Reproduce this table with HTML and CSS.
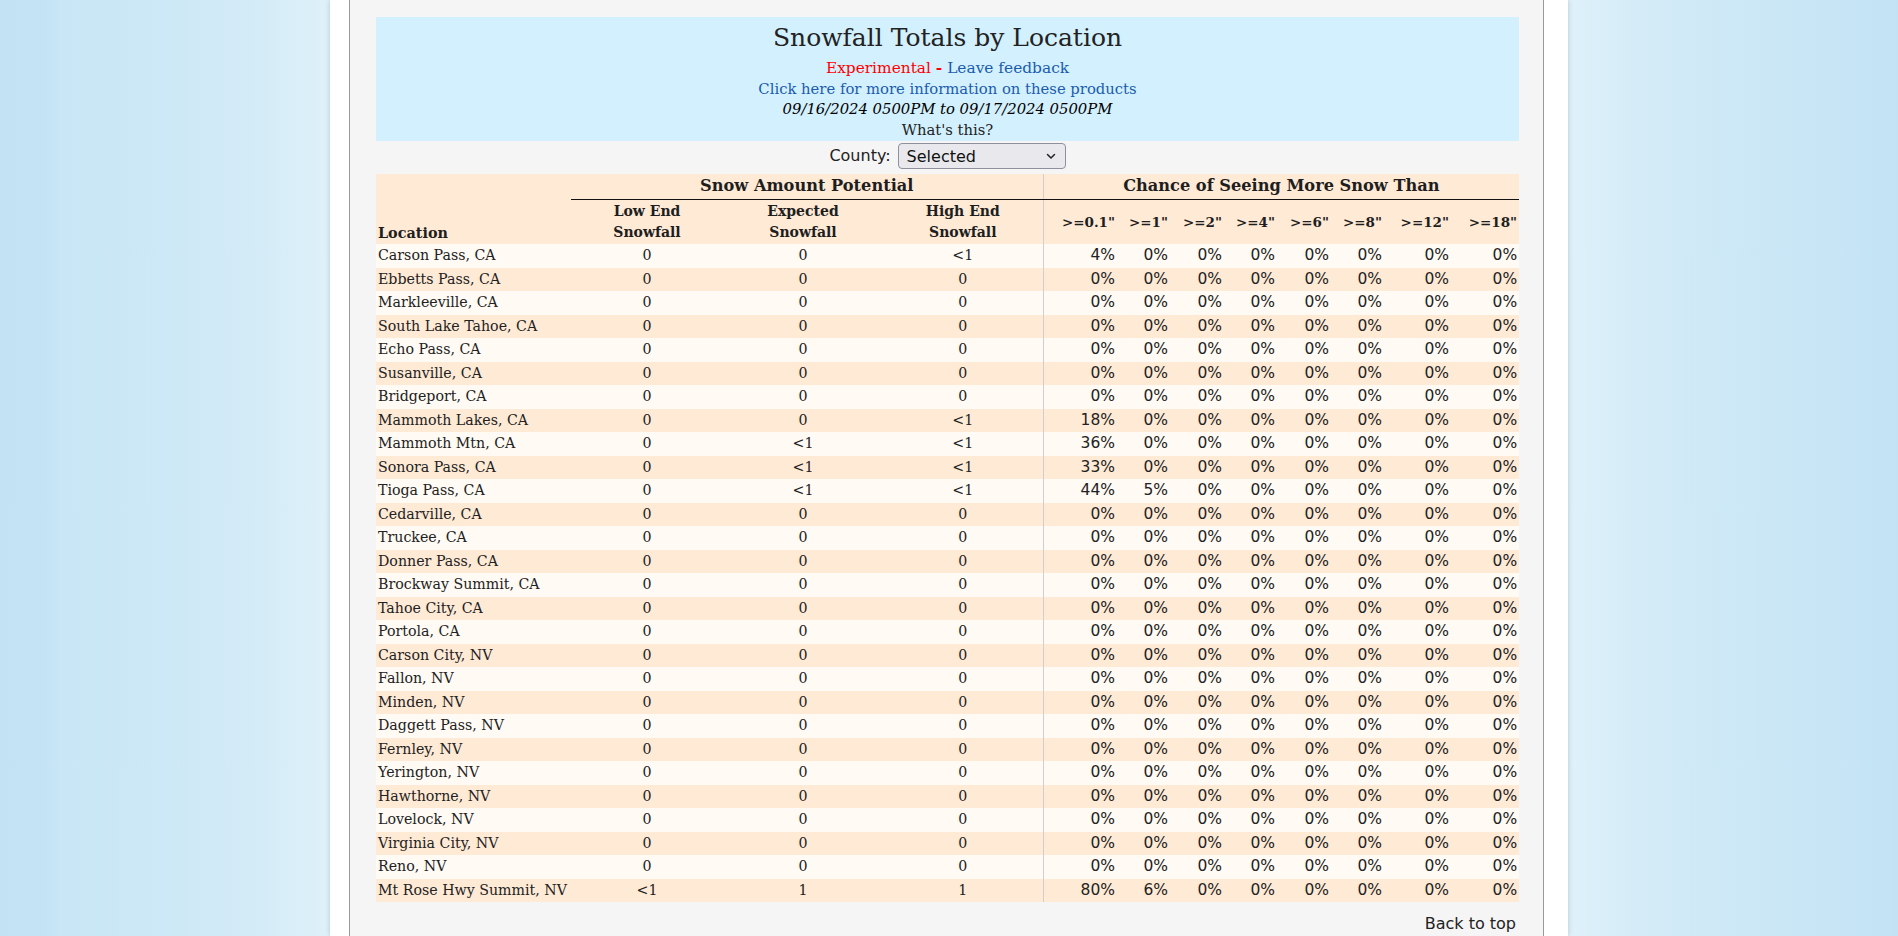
FILE: index.html
```html
<!DOCTYPE html>
<html lang="en">
<head>
<meta charset="utf-8">
<title>Snowfall Totals by Location</title>
<link rel="stylesheet" href="styles.css">
</head>
<body>
<div class="page">
  <div class="panel">
    <div class="banner">
      <h1 class="title">Snowfall Totals by Location</h1>
      <div class="line line-exp"><span class="exp">Experimental <b>-</b> </span><a class="link" href="#">Leave feedback</a></div>
      <div class="line"><a class="link" href="#">Click here for more information on these products</a></div>
      <div class="line date">09/16/2024 0500PM to 09/17/2024 0500PM</div>
      <div class="line">What's this?</div>
    </div>
    <div class="county">
      <span class="county-label">County:</span>
      <div class="select">
        <span>Selected</span>
        <svg class="chev" width="10" height="7" viewBox="0 0 10 7"><path d="M1.5 1.5 L5 5 L8.5 1.5" fill="none" stroke="#222" stroke-width="1.5" stroke-linecap="round" stroke-linejoin="round"/></svg>
      </div>
    </div>
    <table class="snow">
      <colgroup>
        <col class="c-loc"><col class="c-amt1"><col class="c-amt"><col class="c-amt">
        <col class="c-p1"><col class="c-p53"><col class="c-p54"><col class="c-p53"><col class="c-p54"><col class="c-p53"><col class="c-p67"><col class="c-p68">
      </colgroup>
      <thead>
        <tr class="h1row">
          <th class="th-loc" rowspan="2">Location</th>
          <th class="th-group" colspan="3">Snow Amount Potential</th>
          <th class="th-group sep" colspan="8">Chance of Seeing More Snow Than</th>
        </tr>
        <tr class="h2row">
          <th class="th-amt">Low End<br>Snowfall</th>
          <th class="th-amt">Expected<br>Snowfall</th>
          <th class="th-amt">High End<br>Snowfall</th>
          <th class="th-p sep">&gt;=0.1"</th>
          <th class="th-p">&gt;=1"</th>
          <th class="th-p">&gt;=2"</th>
          <th class="th-p">&gt;=4"</th>
          <th class="th-p">&gt;=6"</th>
          <th class="th-p">&gt;=8"</th>
          <th class="th-p">&gt;=12"</th>
          <th class="th-p">&gt;=18"</th>
        </tr>
      </thead>
      <tbody class="rows">
        <tr><td class="loc">Carson Pass, CA</td><td class="amt">0</td><td class="amt">0</td><td class="amt">&lt;1</td><td class="pct sep">4%</td><td class="pct">0%</td><td class="pct">0%</td><td class="pct">0%</td><td class="pct">0%</td><td class="pct">0%</td><td class="pct">0%</td><td class="pct">0%</td></tr>
        <tr><td class="loc">Ebbetts Pass, CA</td><td class="amt">0</td><td class="amt">0</td><td class="amt">0</td><td class="pct sep">0%</td><td class="pct">0%</td><td class="pct">0%</td><td class="pct">0%</td><td class="pct">0%</td><td class="pct">0%</td><td class="pct">0%</td><td class="pct">0%</td></tr>
        <tr><td class="loc">Markleeville, CA</td><td class="amt">0</td><td class="amt">0</td><td class="amt">0</td><td class="pct sep">0%</td><td class="pct">0%</td><td class="pct">0%</td><td class="pct">0%</td><td class="pct">0%</td><td class="pct">0%</td><td class="pct">0%</td><td class="pct">0%</td></tr>
        <tr><td class="loc">South Lake Tahoe, CA</td><td class="amt">0</td><td class="amt">0</td><td class="amt">0</td><td class="pct sep">0%</td><td class="pct">0%</td><td class="pct">0%</td><td class="pct">0%</td><td class="pct">0%</td><td class="pct">0%</td><td class="pct">0%</td><td class="pct">0%</td></tr>
        <tr><td class="loc">Echo Pass, CA</td><td class="amt">0</td><td class="amt">0</td><td class="amt">0</td><td class="pct sep">0%</td><td class="pct">0%</td><td class="pct">0%</td><td class="pct">0%</td><td class="pct">0%</td><td class="pct">0%</td><td class="pct">0%</td><td class="pct">0%</td></tr>
        <tr><td class="loc">Susanville, CA</td><td class="amt">0</td><td class="amt">0</td><td class="amt">0</td><td class="pct sep">0%</td><td class="pct">0%</td><td class="pct">0%</td><td class="pct">0%</td><td class="pct">0%</td><td class="pct">0%</td><td class="pct">0%</td><td class="pct">0%</td></tr>
        <tr><td class="loc">Bridgeport, CA</td><td class="amt">0</td><td class="amt">0</td><td class="amt">0</td><td class="pct sep">0%</td><td class="pct">0%</td><td class="pct">0%</td><td class="pct">0%</td><td class="pct">0%</td><td class="pct">0%</td><td class="pct">0%</td><td class="pct">0%</td></tr>
        <tr><td class="loc">Mammoth Lakes, CA</td><td class="amt">0</td><td class="amt">0</td><td class="amt">&lt;1</td><td class="pct sep">18%</td><td class="pct">0%</td><td class="pct">0%</td><td class="pct">0%</td><td class="pct">0%</td><td class="pct">0%</td><td class="pct">0%</td><td class="pct">0%</td></tr>
        <tr><td class="loc">Mammoth Mtn, CA</td><td class="amt">0</td><td class="amt">&lt;1</td><td class="amt">&lt;1</td><td class="pct sep">36%</td><td class="pct">0%</td><td class="pct">0%</td><td class="pct">0%</td><td class="pct">0%</td><td class="pct">0%</td><td class="pct">0%</td><td class="pct">0%</td></tr>
        <tr><td class="loc">Sonora Pass, CA</td><td class="amt">0</td><td class="amt">&lt;1</td><td class="amt">&lt;1</td><td class="pct sep">33%</td><td class="pct">0%</td><td class="pct">0%</td><td class="pct">0%</td><td class="pct">0%</td><td class="pct">0%</td><td class="pct">0%</td><td class="pct">0%</td></tr>
        <tr><td class="loc">Tioga Pass, CA</td><td class="amt">0</td><td class="amt">&lt;1</td><td class="amt">&lt;1</td><td class="pct sep">44%</td><td class="pct">5%</td><td class="pct">0%</td><td class="pct">0%</td><td class="pct">0%</td><td class="pct">0%</td><td class="pct">0%</td><td class="pct">0%</td></tr>
        <tr><td class="loc">Cedarville, CA</td><td class="amt">0</td><td class="amt">0</td><td class="amt">0</td><td class="pct sep">0%</td><td class="pct">0%</td><td class="pct">0%</td><td class="pct">0%</td><td class="pct">0%</td><td class="pct">0%</td><td class="pct">0%</td><td class="pct">0%</td></tr>
        <tr><td class="loc">Truckee, CA</td><td class="amt">0</td><td class="amt">0</td><td class="amt">0</td><td class="pct sep">0%</td><td class="pct">0%</td><td class="pct">0%</td><td class="pct">0%</td><td class="pct">0%</td><td class="pct">0%</td><td class="pct">0%</td><td class="pct">0%</td></tr>
        <tr><td class="loc">Donner Pass, CA</td><td class="amt">0</td><td class="amt">0</td><td class="amt">0</td><td class="pct sep">0%</td><td class="pct">0%</td><td class="pct">0%</td><td class="pct">0%</td><td class="pct">0%</td><td class="pct">0%</td><td class="pct">0%</td><td class="pct">0%</td></tr>
        <tr><td class="loc">Brockway Summit, CA</td><td class="amt">0</td><td class="amt">0</td><td class="amt">0</td><td class="pct sep">0%</td><td class="pct">0%</td><td class="pct">0%</td><td class="pct">0%</td><td class="pct">0%</td><td class="pct">0%</td><td class="pct">0%</td><td class="pct">0%</td></tr>
        <tr><td class="loc">Tahoe City, CA</td><td class="amt">0</td><td class="amt">0</td><td class="amt">0</td><td class="pct sep">0%</td><td class="pct">0%</td><td class="pct">0%</td><td class="pct">0%</td><td class="pct">0%</td><td class="pct">0%</td><td class="pct">0%</td><td class="pct">0%</td></tr>
        <tr><td class="loc">Portola, CA</td><td class="amt">0</td><td class="amt">0</td><td class="amt">0</td><td class="pct sep">0%</td><td class="pct">0%</td><td class="pct">0%</td><td class="pct">0%</td><td class="pct">0%</td><td class="pct">0%</td><td class="pct">0%</td><td class="pct">0%</td></tr>
        <tr><td class="loc">Carson City, NV</td><td class="amt">0</td><td class="amt">0</td><td class="amt">0</td><td class="pct sep">0%</td><td class="pct">0%</td><td class="pct">0%</td><td class="pct">0%</td><td class="pct">0%</td><td class="pct">0%</td><td class="pct">0%</td><td class="pct">0%</td></tr>
        <tr><td class="loc">Fallon, NV</td><td class="amt">0</td><td class="amt">0</td><td class="amt">0</td><td class="pct sep">0%</td><td class="pct">0%</td><td class="pct">0%</td><td class="pct">0%</td><td class="pct">0%</td><td class="pct">0%</td><td class="pct">0%</td><td class="pct">0%</td></tr>
        <tr><td class="loc">Minden, NV</td><td class="amt">0</td><td class="amt">0</td><td class="amt">0</td><td class="pct sep">0%</td><td class="pct">0%</td><td class="pct">0%</td><td class="pct">0%</td><td class="pct">0%</td><td class="pct">0%</td><td class="pct">0%</td><td class="pct">0%</td></tr>
        <tr><td class="loc">Daggett Pass, NV</td><td class="amt">0</td><td class="amt">0</td><td class="amt">0</td><td class="pct sep">0%</td><td class="pct">0%</td><td class="pct">0%</td><td class="pct">0%</td><td class="pct">0%</td><td class="pct">0%</td><td class="pct">0%</td><td class="pct">0%</td></tr>
        <tr><td class="loc">Fernley, NV</td><td class="amt">0</td><td class="amt">0</td><td class="amt">0</td><td class="pct sep">0%</td><td class="pct">0%</td><td class="pct">0%</td><td class="pct">0%</td><td class="pct">0%</td><td class="pct">0%</td><td class="pct">0%</td><td class="pct">0%</td></tr>
        <tr><td class="loc">Yerington, NV</td><td class="amt">0</td><td class="amt">0</td><td class="amt">0</td><td class="pct sep">0%</td><td class="pct">0%</td><td class="pct">0%</td><td class="pct">0%</td><td class="pct">0%</td><td class="pct">0%</td><td class="pct">0%</td><td class="pct">0%</td></tr>
        <tr><td class="loc">Hawthorne, NV</td><td class="amt">0</td><td class="amt">0</td><td class="amt">0</td><td class="pct sep">0%</td><td class="pct">0%</td><td class="pct">0%</td><td class="pct">0%</td><td class="pct">0%</td><td class="pct">0%</td><td class="pct">0%</td><td class="pct">0%</td></tr>
        <tr><td class="loc">Lovelock, NV</td><td class="amt">0</td><td class="amt">0</td><td class="amt">0</td><td class="pct sep">0%</td><td class="pct">0%</td><td class="pct">0%</td><td class="pct">0%</td><td class="pct">0%</td><td class="pct">0%</td><td class="pct">0%</td><td class="pct">0%</td></tr>
        <tr><td class="loc">Virginia City, NV</td><td class="amt">0</td><td class="amt">0</td><td class="amt">0</td><td class="pct sep">0%</td><td class="pct">0%</td><td class="pct">0%</td><td class="pct">0%</td><td class="pct">0%</td><td class="pct">0%</td><td class="pct">0%</td><td class="pct">0%</td></tr>
        <tr><td class="loc">Reno, NV</td><td class="amt">0</td><td class="amt">0</td><td class="amt">0</td><td class="pct sep">0%</td><td class="pct">0%</td><td class="pct">0%</td><td class="pct">0%</td><td class="pct">0%</td><td class="pct">0%</td><td class="pct">0%</td><td class="pct">0%</td></tr>
        <tr><td class="loc">Mt Rose Hwy Summit, NV</td><td class="amt">&lt;1</td><td class="amt">1</td><td class="amt">1</td><td class="pct sep">80%</td><td class="pct">6%</td><td class="pct">0%</td><td class="pct">0%</td><td class="pct">0%</td><td class="pct">0%</td><td class="pct">0%</td><td class="pct">0%</td></tr>
      </tbody>
    </table>
    <div class="back"><a class="back-link" href="#">Back to top</a></div>
  </div>
</div>
</body>
</html>
```

FILE: styles.css
```css
html, body {
  margin: 0;
  padding: 0;
  height: 100%;
}

body {
  background: linear-gradient(to right,
    #c3e2f4 0px, #c4e3f5 45px, #c8e6f5 60px, #cde8f6 165px, #d3ebf7 250px, #dbeff9 310px, #e0f1fa 330px,
    #e0f1fa 1568px, #dbeff9 1590px, #d3ebf7 1650px, #cde8f6 1730px, #c8e6f5 1800px, #c3e2f4 1898px);
  font-family: "DejaVu Sans", Verdana, sans-serif;
  color: #222;
  overflow: hidden;
}

.page {
  width: 1238px;
  margin: 0 auto;
  box-sizing: border-box;
  min-height: 100%;
  background: #fff;
  padding: 0 24px 0 19px;
  box-shadow: 0 0 5px rgba(90, 120, 140, 0.35);
}

.panel {
  background: #f5f5f5;
  border-left: 1px solid #9a9a9a;
  border-right: 1px solid #9a9a9a;
  min-height: 936px;
  box-sizing: border-box;
  padding: 17px 24px 0 26px;
}

.banner {
  background: #d3f0fe;
  text-align: center;
  padding: 6px 0 1px;
  font-family: "DejaVu Serif", Georgia, serif;
  font-size: 14.8px;
  color: #222;
}

.title {
  margin: 0 0 6px;
  font-size: 25px;
  line-height: 29px;
  font-weight: normal;
  color: #222;
}

.line {
  line-height: 20.5px;
}

.line-exp {
  font-size: 15.4px;
}

.exp {
  color: #f00;
}

.exp b {
  font-weight: bold;
}

.link {
  color: #1a5cad;
  text-decoration: none;
}

.date {
  font-style: italic;
  color: #000;
}

.county {
  display: flex;
  justify-content: center;
  align-items: center;
  gap: 7px;
  padding: 2px 0 5px;
  font-size: 16px;
  color: #222;
}

.county-label {
  line-height: 20px;
}

.select {
  box-sizing: border-box;
  width: 168px;
  height: 26px;
  border: 1px solid #8f8f9d;
  border-radius: 4px;
  background: #e9e9ed;
  display: flex;
  align-items: center;
  justify-content: space-between;
  padding: 0 9px 0 8px;
  font-size: 16px;
  color: #111;
}

.chev {
  display: block;
}

.snow {
  width: 1143px;
  table-layout: fixed;
  border-collapse: collapse;
  border-spacing: 0;
  font-family: "DejaVu Serif", Georgia, serif;
  font-size: 14.2px;
  color: #222;
}

.c-loc { width: 195px; }
.c-amt1 { width: 152px; }
.c-amt { width: 160px; }
.c-p1 { width: 74px; }
.c-p53 { width: 53px; }
.c-p54 { width: 54px; }
.c-p67 { width: 67px; }
.c-p68 { width: 68px; }

.snow thead {
  background: #ffead6;
}

.snow th {
  padding: 0 2px;
  font-weight: bold;
  color: #1e1e1e;
}

.h1row {
  height: 25px;
}

.h2row {
  height: 45px;
}

.th-loc {
  text-align: left;
  vertical-align: bottom;
  line-height: 21.6px;
  padding-bottom: 1px;
  font-size: 14.4px;
}

.th-group {
  text-align: center;
  border-bottom: 1px solid #111;
  line-height: 24px;
  font-size: 16.2px;
}

.th-amt {
  text-align: center;
  line-height: 21.6px;
  vertical-align: bottom;
  padding-bottom: 1px;
  font-size: 14px;
}

.th-p {
  text-align: right;
  font-size: 13.5px;
  vertical-align: middle;
}

.sep {
  border-left: 1px solid #cfcfcf;
}

.rows tr {
  height: 23.5px;
  background: #fffaf4;
}

.rows tr:nth-child(even) {
  background: #ffead6;
}

.rows td {
  padding: 0 2px;
  line-height: 23.5px;
  white-space: nowrap;
}

.loc {
  text-align: left;
}

.amt {
  text-align: center;
}

.pct {
  text-align: right;
  font-family: "DejaVu Sans", Verdana, sans-serif;
  font-size: 15.5px;
}

.back {
  text-align: right;
  padding: 12px 3px 0 0;
  font-size: 16px;
  line-height: 20px;
}

.back-link {
  color: #222;
  text-decoration: none;
}
```
